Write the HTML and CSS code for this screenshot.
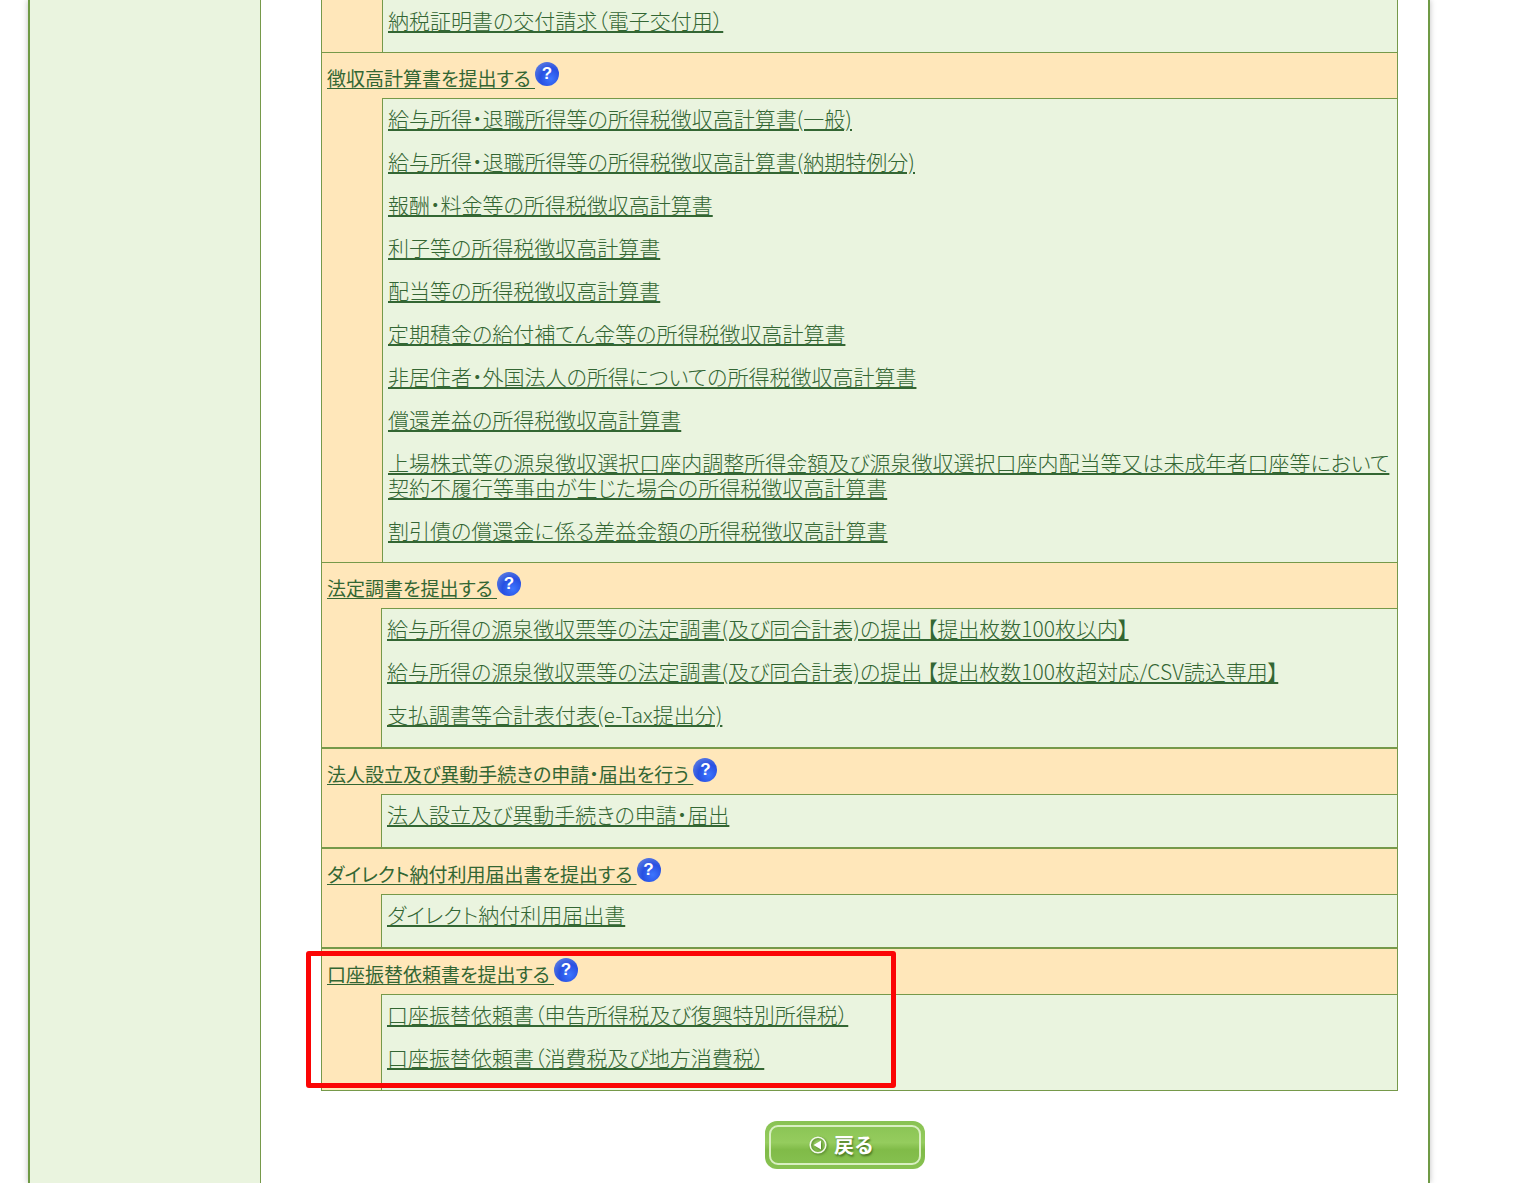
FILE: index.html
```html
<!DOCTYPE html>
<html lang="ja">
<head>
  <meta charset="UTF-8">
  <meta name="viewport" content="width=device-width, initial-scale=1.0">
  <title>申告・申請・納税</title>
  <link rel="stylesheet" href="styles.css">
</head>
<body>
  <div class="page">
    <aside class="sidebar"></aside>
    <main class="content">
      <div class="menu">
        <section class="group">
          <ul class="links links-first">
            <li><a href="#">納税証明書の交付請求（電子交付用）</a></li>
          </ul>
        </section>
        <section class="group">
          <h2><a href="#">徴収高計算書を提出する <span class="help">?</span></a></h2>
          <ul class="links">
            <li><a href="#">給与所得・退職所得等の所得税徴収高計算書(一般)</a></li>
            <li><a href="#">給与所得・退職所得等の所得税徴収高計算書(納期特例分)</a></li>
            <li><a href="#">報酬・料金等の所得税徴収高計算書</a></li>
            <li><a href="#">利子等の所得税徴収高計算書</a></li>
            <li><a href="#">配当等の所得税徴収高計算書</a></li>
            <li><a href="#">定期積金の給付補てん金等の所得税徴収高計算書</a></li>
            <li><a href="#">非居住者・外国法人の所得についての所得税徴収高計算書</a></li>
            <li><a href="#">償還差益の所得税徴収高計算書</a></li>
            <li><a href="#">上場株式等の源泉徴収選択口座内調整所得金額及び源泉徴収選択口座内配当等又は未成年者口座等において契約不履行等事由が生じた場合の所得税徴収高計算書</a></li>
            <li><a href="#">割引債の償還金に係る差益金額の所得税徴収高計算書</a></li>
          </ul>
        </section>
        <section class="group boxed">
          <h2><a href="#">法定調書を提出する <span class="help">?</span></a></h2>
          <ul class="links">
            <li><a href="#">給与所得の源泉徴収票等の法定調書(及び同合計表)の提出 【提出枚数100枚以内】</a></li>
            <li><a href="#">給与所得の源泉徴収票等の法定調書(及び同合計表)の提出 【提出枚数100枚超対応/CSV読込専用】</a></li>
            <li><a href="#">支払調書等合計表付表(e-Tax提出分)</a></li>
          </ul>
        </section>
        <section class="group boxed">
          <h2><a href="#">法人設立及び異動手続きの申請・届出を行う <span class="help">?</span></a></h2>
          <ul class="links">
            <li><a href="#">法人設立及び異動手続きの申請・届出</a></li>
          </ul>
        </section>
        <section class="group boxed">
          <h2><a href="#">ダイレクト納付利用届出書を提出する <span class="help">?</span></a></h2>
          <ul class="links">
            <li><a href="#">ダイレクト納付利用届出書</a></li>
          </ul>
        </section>
        <section class="group boxed">
          <h2><a href="#">口座振替依頼書を提出する <span class="help">?</span></a></h2>
          <ul class="links">
            <li><a href="#">口座振替依頼書（申告所得税及び復興特別所得税）</a></li>
            <li><a href="#">口座振替依頼書（消費税及び地方消費税）</a></li>
          </ul>
          <div class="marker"></div>
        </section>
      </div>

      <button type="button" class="back-button">
        <span class="back-inner">
          <svg width="18" height="18" viewBox="0 0 18 18" aria-hidden="true">
            <circle cx="9" cy="9" r="7.8" fill="none" stroke="#f4faec" stroke-width="1.6"/>
            <path d="M12 4.5v9L4.5 9z" fill="#fff"/>
          </svg>
          戻る
        </span>
      </button>
    </main>
  </div>
</body>
</html>
```

FILE: styles.css
```css
* {
  box-sizing: border-box;
}
body {
  margin: 0;
  padding: 0 90px 0 28px;
  background: #fff;
  color: #336633;
  font-family: "Noto Sans CJK JP", sans-serif;
  font-feature-settings: "palt";
}
.page {
  display: flex;
  min-height: 100vh;
  border-left: 2px solid #6f9a45;
  border-right: 2px solid #6f9a45;
  box-shadow: 0 0 6px rgba(0,0,0,0.25);
}
.sidebar {
  flex: 0 0 231px;
  background: #eaf4df;
  border-right: 1px solid #76994a;
}
.content {
  flex: 1;
  min-width: 0;
  padding-bottom: 14px;
}
.menu {
  margin: 0 30px 30px 60px;
  border: 1px solid #76994a;
  border-top: none;
  background: #ffe7ba;
}
.group {
  position: relative;
}
.group + .group {
  border-top: 1px solid #76994a;
}
.group.boxed + .boxed {
  border-top-width: 2px;
}
h2 {
  margin: 0;
  padding: 9px 5px 0;
  height: 45px;
  font-size: 19px;
  font-weight: 400;
  line-height: 32px;
}
a {
  color: #336633;
  text-decoration: underline;
  text-decoration-thickness: 1px;
  text-underline-offset: 2px;
}
.help {
  display: inline-block;
  width: 24px;
  height: 24px;
  overflow: hidden;
  border-radius: 50%;
  background: radial-gradient(circle at 65% 70%, #3c76ff, #2850e2 45%, #5f7fe0 85%, #a9bdf0);
  color: #fff;
  font: bold 17px "Liberation Sans", sans-serif;
  line-height: 24px;
  text-align: center;
}
.links {
  list-style: none;
  margin: 0 0 0 60px;
  padding: 7px 6px 1px 5px;
  border-top: 1px solid #76994a;
  border-left: 1px solid #76994a;
  background: #eaf4df;
  font-size: 21px;
  font-weight: 300;
  line-height: 25px;
}
.links-first {
  border-top: none;
  padding-top: 8px;
}
.links li {
  padding-bottom: 18px;
}
.links a {
  text-decoration-thickness: 2px;
}
.boxed .links {
  margin-left: 59px;
  padding-bottom: 2px;
}
/* red frame over the account transfer section */
.marker {
  position: absolute;
  top: 2px;
  left: -16px;
  width: 590px;
  height: 137px;
  border: 5px solid #fb0505;
  border-radius: 3px;
  pointer-events: none;
}
.back-button {
  display: block;
  width: 160px;
  height: 48px;
  margin: 0 auto;
  padding: 4px;
  border: none;
  border-radius: 12px;
  background: linear-gradient(#88c252, #95cc5e 45%, #80bb48 60%, #88c252);
  cursor: pointer;
}
.back-inner {
  display: flex;
  align-items: center;
  justify-content: center;
  gap: 7px;
  height: 40px;
  padding-right: 6px;
  border: 2px solid #d9efc2;
  border-radius: 9px;
  color: #fff;
  font-family: "Noto Sans CJK JP", sans-serif;
  font-size: 20px;
  font-weight: 700;
  line-height: 24px;
  text-shadow: 1px 2px 2px #4b7a25;
}
.back-inner svg {
  filter: drop-shadow(1px 1px 1px #4b7a25);
}
```
